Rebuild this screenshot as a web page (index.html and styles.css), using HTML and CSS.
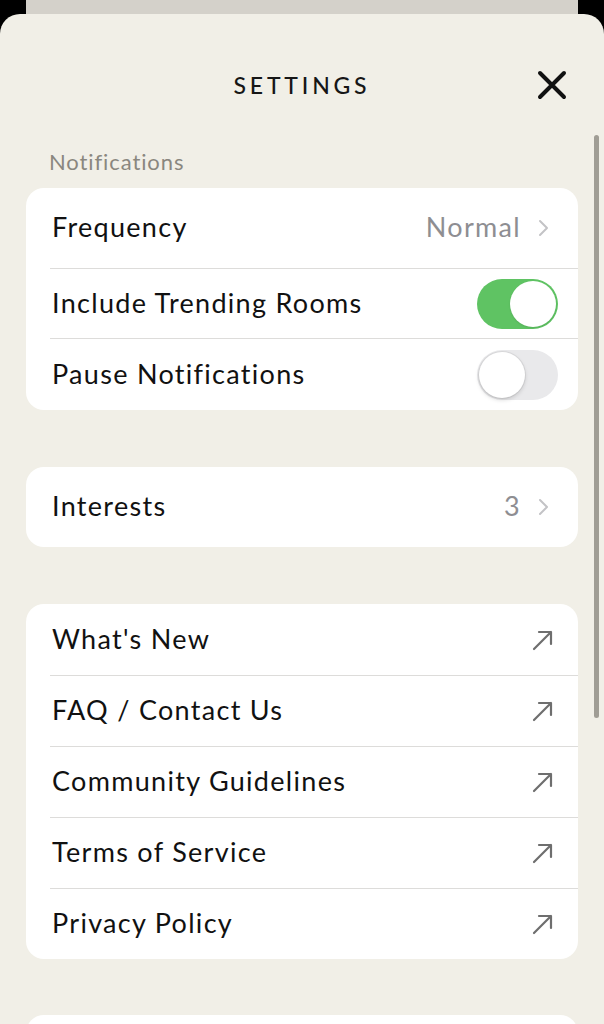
FILE: index.html
```html
<!DOCTYPE html>
<html lang="en">
<head>
  <meta charset="UTF-8" />
  <meta name="viewport" content="width=device-width, initial-scale=1.0"/>
  <title>Settings</title>
  <link rel="stylesheet" href="styles.css">
</head>
<body>

  <div class="backdrop"></div>

  <div class="sheet">
    <div class="scrollbar"></div>

    <div class="header">
      <span></span>
      <h1>SETTINGS</h1>
      <button class="close-btn" aria-label="Close">
        <svg width="30" height="30" viewBox="0 0 30 30">
          <path d="M3 3 L27 27 M27 3 L3 27" stroke="#111" stroke-width="4" stroke-linecap="round" fill="none"/>
        </svg>
      </button>
    </div>

    <div class="section-label">Notifications</div>
    <div class="card">
      <div class="row row-tall">
        <span class="row-title">Frequency</span>
        <span class="row-value">Normal</span>
        <svg class="chevron" width="12" height="18" viewBox="0 0 12 18"><path d="M2 2 L9 9 L2 16" stroke="#c3c3c6" stroke-width="2" fill="none" stroke-linecap="round" stroke-linejoin="round"/></svg>
      </div>
      <div class="row row-mid">
        <span class="row-title">Include Trending Rooms</span>
        <span class="toggle on"><span class="knob"></span></span>
      </div>
      <div class="row row-low">
        <span class="row-title">Pause Notifications</span>
        <span class="toggle"><span class="knob"></span></span>
      </div>
    </div>

    <div class="card spaced">
      <div class="row row-tall">
        <span class="row-title">Interests</span>
        <span class="row-value">3</span>
        <svg class="chevron" width="12" height="18" viewBox="0 0 12 18"><path d="M2 2 L9 9 L2 16" stroke="#c3c3c6" stroke-width="2" fill="none" stroke-linecap="round" stroke-linejoin="round"/></svg>
      </div>
    </div>

    <div class="card spaced links">
      <div class="row">
        <span class="row-title">What's New</span>
        <svg class="arrow" width="22" height="22" viewBox="0 0 22 22"><path d="M2 20 L19 3 M7 3 H19 V15" stroke="#6e6e6e" stroke-width="2.2" fill="none" stroke-linecap="round" stroke-linejoin="round"/></svg>
      </div>
      <div class="row">
        <span class="row-title">FAQ / Contact Us</span>
        <svg class="arrow" width="22" height="22" viewBox="0 0 22 22"><path d="M2 20 L19 3 M7 3 H19 V15" stroke="#6e6e6e" stroke-width="2.2" fill="none" stroke-linecap="round" stroke-linejoin="round"/></svg>
      </div>
      <div class="row">
        <span class="row-title">Community Guidelines</span>
        <svg class="arrow" width="22" height="22" viewBox="0 0 22 22"><path d="M2 20 L19 3 M7 3 H19 V15" stroke="#6e6e6e" stroke-width="2.2" fill="none" stroke-linecap="round" stroke-linejoin="round"/></svg>
      </div>
      <div class="row">
        <span class="row-title">Terms of Service</span>
        <svg class="arrow" width="22" height="22" viewBox="0 0 22 22"><path d="M2 20 L19 3 M7 3 H19 V15" stroke="#6e6e6e" stroke-width="2.2" fill="none" stroke-linecap="round" stroke-linejoin="round"/></svg>
      </div>
      <div class="row">
        <span class="row-title">Privacy Policy</span>
        <svg class="arrow" width="22" height="22" viewBox="0 0 22 22"><path d="M2 20 L19 3 M7 3 H19 V15" stroke="#6e6e6e" stroke-width="2.2" fill="none" stroke-linecap="round" stroke-linejoin="round"/></svg>
      </div>
    </div>

    <div class="card spaced next"></div>
  </div>

</body>
</html>
```

FILE: styles.css
```css
html, body {
  margin: 0;
  height: 100%;
  overflow: hidden;
}

body {
  background: #000;
  font-family: Lato, 'Open Sans', sans-serif;
  color: #111;
}

.backdrop {
  height: 14px;
  margin: 0 26px;
  background: #d4d1ca;
}

.sheet {
  position: relative;
  background: #f1efe7;
  border-radius: 20px 20px 0 0;
  height: 1010px;
  overflow: hidden;
}

.scrollbar {
  position: absolute;
  right: 5px;
  top: 121px;
  width: 5px;
  height: 583px;
  border-radius: 3px;
  background: #a09d95;
}

.header {
  display: grid;
  grid-template-columns: 1fr auto 1fr;
  align-items: center;
  padding-top: 56px;
  height: 30px;
}

.header h1 {
  margin: 0;
  font-size: 23px;
  font-weight: 500;
  letter-spacing: 3.8px;
  color: #161616;
  line-height: 30px;
}

.close-btn {
  justify-self: end;
  margin-right: 37px;
  padding: 0;
  border: none;
  background: none;
  width: 30px;
  height: 30px;
}

.section-label {
  margin: 50px 0 14px 49px;
  font-size: 22px;
  letter-spacing: 0.9px;
  line-height: 24px;
  color: #8a877f;
}

.card {
  margin: 0 26px;
  background: #fff;
  border-radius: 18px;
}

.card.spaced {
  margin-top: 57px;
}

.card.next {
  margin-top: 56px;
  height: 80px;
}

.row {
  display: flex;
  align-items: center;
  height: 71px;
  margin-left: 24px;
  padding: 0 24px 0 2px;
  border-top: 1px solid #dddcda;
  box-sizing: border-box;
}

.row:first-child {
  border-top: none;
}

.row-tall {
  height: 80px;
  padding-right: 26px;
}

.row-mid {
  height: 70px;
  padding-right: 20px;
}

.row-low {
  height: 72px;
  padding-right: 20px;
}

.row-title {
  flex: 1;
  padding-bottom: 3px;
  font-size: 27px;
  letter-spacing: 1.3px;
  color: #111;
}

.row-value {
  padding-bottom: 3px;
  font-size: 27px;
  letter-spacing: 1.3px;
  color: #8e8e92;
  margin-right: 17px;
}

.chevron {
  margin-right: 2px;
}

.toggle {
  position: relative;
  width: 81px;
  height: 50px;
  border-radius: 25px;
  background: #e9e9eb;
}

.toggle .knob {
  position: absolute;
  top: 2px;
  left: 2px;
  width: 46px;
  height: 46px;
  border-radius: 50%;
  background: #fff;
  box-shadow: 0 2px 4px rgba(0,0,0,0.15), 0 0 0 1px rgba(0,0,0,0.06);
}

.toggle.on {
  background: #5fc363;
}

.toggle.on .knob {
  left: auto;
  right: 2px;
  box-shadow: 0 1px 2px rgba(0,0,0,0.1);
}
```
